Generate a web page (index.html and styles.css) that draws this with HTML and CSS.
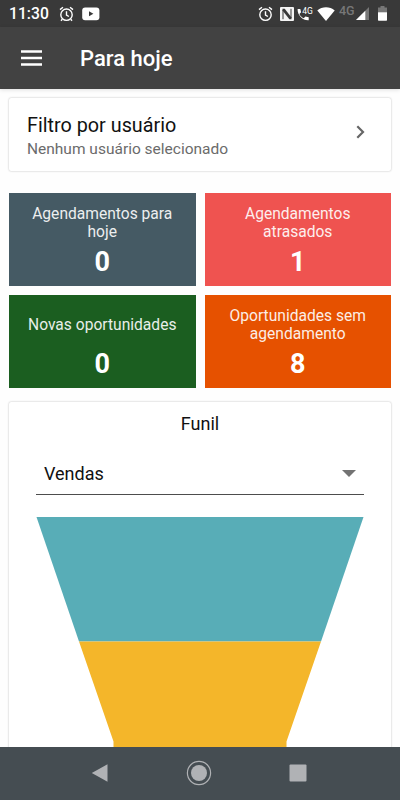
FILE: index.html
```html
<!DOCTYPE html>
<html lang="pt-BR">
<head>
    <meta charset="UTF-8">
    <meta name="viewport" content="width=device-width, initial-scale=1.0">
    <title>Para hoje</title>
    <link rel="stylesheet" href="styles.css">
</head>
<body>
    <div class="status-bar">
        <span class="clock">11:30</span>
        <svg class="alarm" width="15" height="16" viewBox="0 0 15 16">
            <circle cx="7.5" cy="8.7" r="5.7"/>
            <path d="M1 3.6 4 1.2M14 3.6 11 1.2M7.5 5.3v3.7l2.4 1.5M3.3 13.2 2 14.7M11.7 13.2l1.3 1.5"/>
        </svg>
        <svg class="video" width="18" height="14" viewBox="0 0 18 14">
            <rect x="0.2" y="0.4" width="17.2" height="12.8" rx="3" fill="#fff"/>
            <path d="M7 4.3v5l4.4-2.5z" fill="#393939"/>
        </svg>
        <div class="status-right">
            <svg class="alarm" width="15" height="16" viewBox="0 0 15 16">
                <circle cx="7.5" cy="8.7" r="5.7"/>
                <path d="M1 3.6 4 1.2M14 3.6 11 1.2M7.5 5.3v3.7l2.4 1.5"/>
            </svg>
            <svg class="nfc" width="14" height="14" viewBox="0 0 14 14">
                <rect width="14" height="14" rx="1" fill="#f4f4f4"/>
                <path d="M3 12.200V3M11 1.800V11" fill="none" stroke="#393939" stroke-width="1"/>
                <path d="M2.500 1.800h2.200l6.800 8.800v1.600H9.400L2.500 3.400z" fill="#393939"/>
            </svg>
            <svg class="call" width="16" height="16" viewBox="0 0 16 16">
                <path d="M.6 3h2.700l.8 3.200-1.700 1.700c1 2 2.400 3.300 4.300 4.300l1.700-1.700 3.300.8v3C6.200 14.800.3 9.600.6 3z" fill="#fff"/>
                <text x="5.200" y="8">4G</text>
            </svg>
            <svg class="wifi" width="18" height="14" viewBox="0 0 18 14">
                <path d="M.3 3.500C5.200-.7 12.800-.7 17.700 3.500L9 13.900z" fill="#fff"/>
            </svg>
            <span class="network">4G</span>
            <svg class="signal" width="13" height="13" viewBox="0 0 13 13">
                <path d="M13 0v13H0z" fill="#777"/>
                <path d="M9.300 3.700V13H0z" fill="#fff"/>
            </svg>
            <svg class="battery" width="9" height="15" viewBox="0 0 9 15">
                <path d="M2.500 0h4v1.500H9V6.500H0v-5h2.500z" fill="#777"/>
                <path d="M0 6.300h9V14q0 .7-.7.7H.7Q0 14.700 0 14z" fill="#fff"/>
            </svg>
        </div>
    </div>

    <header class="app-bar">
        <svg class="menu-icon" width="21" height="16" viewBox="0 0 21 16">
            <path d="M0 1.500h21M0 8h21M0 14.500h21"/>
        </svg>
        <h1>Para hoje</h1>
    </header>

    <main class="content">
        <section class="card filter">
            <div>
                <h2>Filtro por usuário</h2>
                <p>Nenhum usuário selecionado</p>
            </div>
            <svg class="chevron" width="9" height="14" viewBox="0 0 9 14">
                <path d="M1.300 1.300 7 7l-5.700 5.700"/>
            </svg>
        </section>

        <section class="tiles">
            <div class="tile tile-today">
                <span class="label">Agendamentos para hoje</span>
                <strong>0</strong>
            </div>
            <div class="tile tile-late">
                <span class="label">Agendamentos atrasados</span>
                <strong>1</strong>
            </div>
            <div class="tile tile-new">
                <span class="label">Novas oportunidades</span>
                <strong>0</strong>
            </div>
            <div class="tile tile-open">
                <span class="label">Oportunidades sem agendamento</span>
                <strong>8</strong>
            </div>
        </section>

        <section class="card funnel">
            <h3>Funil</h3>
            <div class="select">
                <span>Vendas</span>
                <svg width="14" height="7" viewBox="0 0 14 7"><path d="M0 0h14L7 7z" fill="#737373"/></svg>
            </div>
            <svg class="chart" width="328" height="260" viewBox="0 0 328 260">
                <path d="M.5 0h327L285 124.500H43z" fill="#58adb7"/>
                <path d="M43 124.500h242L250.500 224.500V260h-173V224.500z" fill="#f4b62a"/>
            </svg>
        </section>
    </main>

    <nav class="nav-bar">
        <svg width="18" height="20" viewBox="0 0 18 20"><path d="M16.500 1.200v17.600L.8 10z"/></svg>
        <svg width="26" height="26" viewBox="0 0 26 26">
            <circle class="ring" cx="13" cy="13" r="11.600"/>
            <circle cx="13" cy="13" r="8"/>
        </svg>
        <svg width="18" height="18" viewBox="0 0 18 18"><rect x=".5" y=".5" width="17" height="17" rx="1"/></svg>
    </nav>
</body>
</html>
```
FILE: styles.css
```css
* {
    box-sizing: border-box;
}
body {
    margin: 0;
    height: 800px;
    display: flex;
    flex-direction: column;
    overflow: hidden;
    font-family: Roboto, sans-serif;
    background: #fefefe;
    color: #111;
}
h1, h2, h3, p {
    margin: 0;
    font-weight: 400;
}
svg {
    display: block;
    flex: none;
}

/* status bar */
.status-bar {
    flex: none;
    height: 27px;
    display: flex;
    align-items: center;
    padding: 0 13px 0 9px;
    background: #393939;
    color: #fff;
}
.clock {
    width: 50px;
    font-size: 15.7px;
    font-weight: 500;
}
.alarm {
    fill: none;
    stroke: #fff;
    stroke-width: 1.4;
}
.video {
    margin-left: 8px;
}
.status-right {
    margin-left: auto;
    display: flex;
    align-items: center;
}
.nfc {
    margin-left: 7px;
}
.call {
    margin-left: 3px;
}
.call text {
    font-size: 8.5px;
    fill: #fff;
}
.wifi {
    margin-left: 4px;
}
.network {
    width: 17px;
    margin: -5px 0 0 4px;
    font-size: 12.5px;
    font-weight: 500;
    line-height: 14px;
    color: #777;
}
.battery {
    margin-left: 9px;
}

/* app bar */
.app-bar {
    flex: none;
    height: 62px;
    display: flex;
    align-items: center;
    gap: 38px;
    padding-left: 21px;
    background: #424242;
    color: #fff;
    box-shadow: 0 1px 4px rgba(0,0,0,0.12);
}
.app-bar h1 {
    font-size: 22px;
    font-weight: 500;
}
.menu-icon {
    stroke: #fff;
    stroke-width: 2.4;
}

.content {
    flex: 1;
    min-height: 0;
    overflow: hidden;
    padding: 9px 9px 0;
}
.card {
    background: #fff;
    border-radius: 2px;
    box-shadow: 0 0 2px rgba(0,0,0,0.3);
}
.filter {
    height: 73px;
    display: flex;
    align-items: center;
    justify-content: space-between;
    padding: 0 26px 5px 18px;
}
.filter > div {
    padding-top: 8px;
}
.filter h2 {
    font-size: 19.8px;
    line-height: 25px;
}
.filter p {
    font-size: 15.5px;
    line-height: 22px;
    color: #6b6b6b;
}
.chevron {
    fill: none;
    stroke: #666;
    stroke-width: 2.2;
}

/* counters */
.tiles {
    display: grid;
    grid-template-columns: 1fr 1fr;
    grid-auto-rows: 93px;
    gap: 9px;
    margin: 22px 0 14px;
}
.tile {
    display: flex;
    flex-direction: column;
    align-items: center;
    padding: 11px 16px 0;
    text-align: center;
    color: #fff;
}
.tile .label {
    height: 37px;
    display: flex;
    align-items: center;
    font-size: 15.6px;
    line-height: 18px;
    opacity: 0.9;
}
.tile strong {
    font-size: 27px;
    line-height: 42px;
}
.tile-today {
    background: #455a64;
}
.tile-late {
    background: #ef5350;
}
.tile-new {
    background: #1b5e20;
}
.tile-open {
    background: #e65100;
}

/* funnel */
.funnel {
    height: 400px;
    padding: 9px 27px 0;
}
.funnel h3 {
    font-size: 18px;
    line-height: 25px;
    text-align: center;
}
.select {
    height: 43px;
    margin: 16px 0 22px;
    padding: 0 8px;
    display: flex;
    align-items: center;
    justify-content: space-between;
    border-bottom: 1px solid #4d4d4d;
    font-size: 18px;
}

.nav-bar {
    flex: none;
    height: 53px;
    display: flex;
    align-items: center;
    justify-content: space-between;
    padding: 0 93px 1px 91px;
    background: #454d52;
}
.nav-bar svg {
    fill: #b0b2b5;
}
.nav-bar .ring {
    fill: none;
    stroke: #b0b2b5;
    stroke-width: 1.2;
}
```
